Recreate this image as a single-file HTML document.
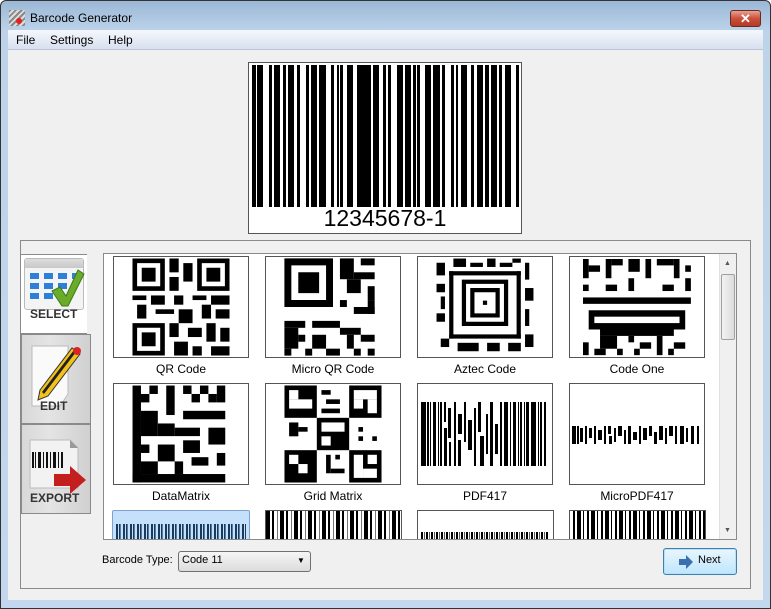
<!DOCTYPE html>
<html><head><meta charset="utf-8"><style>
*{margin:0;padding:0;box-sizing:border-box}
body{width:771px;height:609px;overflow:hidden;background:#fff;font-family:"Liberation Sans",sans-serif;position:relative}
.abs{position:absolute}
.tile{position:absolute;width:136px;height:102px;border:1px solid #555;background:#fff;overflow:hidden}
.lbl{position:absolute;width:136px;text-align:center;font-size:12px;color:#000}
</style></head><body>
<div class="abs" style="left:0;top:0;width:771px;height:609px;background:linear-gradient(#9bb8d6,#bcd3ea 30px,#c3d8ee);border:1px solid #333;border-radius:6px 6px 0 0"></div>
<div class="abs" style="left:9px;top:10px;width:16px;height:16px;background:repeating-linear-gradient(135deg,#888 0 2px,#ddd 2px 4px)"></div>
<div class="abs" style="left:16px;top:18px;width:6px;height:6px;background:#d22;border-radius:50%"></div>
<div class="abs" style="left:30px;top:11px;font-size:12px;color:#000">Barcode Generator</div>
<div class="abs" style="left:730px;top:10px;width:31px;height:17px;background:linear-gradient(#e8a093,#c9503c 50%,#b63a26);border:1px solid #6b2a20;border-radius:3px;color:#fff;font-size:13px;font-weight:bold;text-align:center;line-height:15px">✕</div>
<div class="abs" style="left:8px;top:30px;width:755px;height:570px;background:#f0f0f0"></div>
<div class="abs" style="left:8px;top:30px;width:755px;height:20px;background:linear-gradient(#f5f7fc,#d8e0ef);border-bottom:1px solid #b9c3d6"></div>
<div class="abs" style="left:16px;top:33px;font-size:12px">File</div>
<div class="abs" style="left:50px;top:33px;font-size:12px">Settings</div>
<div class="abs" style="left:108px;top:33px;font-size:12px">Help</div>
<div class="abs" style="left:248px;top:62px;width:274px;height:172px;background:#fff;border:1px solid #555"></div>
<svg class="abs" style="left:0;top:0" width="771" height="240"><g fill="#000">
<rect x="252" y="65" width="4" height="142"/><rect x="257" y="65" width="6" height="142"/><rect x="269" y="65" width="3" height="142"/><rect x="274" y="65" width="6" height="142"/><rect x="283" y="65" width="3" height="142"/><rect x="288" y="65" width="6" height="142"/><rect x="297" y="65" width="3" height="142"/><rect x="306" y="65" width="3" height="142"/><rect x="311" y="65" width="6" height="142"/><rect x="319" y="65" width="7" height="142"/><rect x="331" y="65" width="3" height="142"/><rect x="337" y="65" width="2" height="142"/><rect x="340" y="65" width="3" height="142"/><rect x="347" y="65" width="6" height="142"/><rect x="357" y="65" width="14" height="142"/><rect x="373" y="65" width="6" height="142"/><rect x="383" y="65" width="3" height="142"/><rect x="388" y="65" width="3" height="142"/><rect x="397" y="65" width="6" height="142"/><rect x="405" y="65" width="6" height="142"/><rect x="413" y="65" width="3" height="142"/><rect x="417" y="65" width="3" height="142"/><rect x="425" y="65" width="6" height="142"/><rect x="433" y="65" width="7" height="142"/><rect x="442" y="65" width="3" height="142"/><rect x="451" y="65" width="3" height="142"/><rect x="456" y="65" width="2" height="142"/><rect x="461" y="65" width="6" height="142"/><rect x="471" y="65" width="3" height="142"/><rect x="477" y="65" width="6" height="142"/><rect x="485" y="65" width="4" height="142"/><rect x="491" y="65" width="6" height="142"/><rect x="499" y="65" width="3" height="142"/><rect x="505" y="65" width="6" height="142"/><rect x="516" y="65" width="3" height="142"/>
</g><text x="385" y="226" font-family="Liberation Sans" font-size="23" text-anchor="middle">12345678-1</text></svg>
<div class="abs" style="left:20px;top:240px;width:731px;height:349px;background:#fff;border:1px solid #8a8a8a"></div>
<div class="abs" style="left:87px;top:241px;width:663px;height:347px;background:#f0f0f0"></div>
<div class="abs" style="left:21px;top:241px;width:66px;height:347px;background:#f0f0f0"></div>
<div class="abs" style="left:20px;top:254px;width:67px;height:80px;background:#fff;border:1px solid #8a8a8a;border-right:none"></div>
<div class="abs" style="left:24px;top:258px;width:60px;height:52px;background:#f4f4f4;border:1px solid #bbb;border-radius:3px"></div>
<div class="abs" style="left:25px;top:259px;width:58px;height:9px;background:linear-gradient(#ddd,#c8c8c8)"></div>
<svg class="abs" style="left:24px;top:258px" width="62" height="55"><g fill="#2d7fd8"><rect x="6" y="15" width="9" height="6"/><rect x="20" y="15" width="9" height="6"/><rect x="34" y="15" width="9" height="6"/><rect x="48" y="15" width="8" height="6"/><rect x="6" y="25" width="9" height="6"/><rect x="20" y="25" width="9" height="6"/><rect x="34" y="25" width="9" height="6"/><rect x="6" y="35" width="9" height="6"/><rect x="20" y="35" width="9" height="6"/></g><path d="M28 33 L36 29 L42 38 L54 12 L60 16 L44 48 L38 48 Z" fill="#6aab2a" stroke="#3d7a15"/></svg>
<div class="abs" style="left:30px;top:307px;font-size:12px;font-weight:bold;color:#333">SELECT</div>
<div class="abs" style="left:21px;top:334px;width:70px;height:90px;background:linear-gradient(90deg,#d8d8d8,#e4e4e4 40%,#d0d0d0);border:1px solid #8a8a8a"></div>
<svg class="abs" style="left:28px;top:344px" width="60" height="70"><path d="M4 2 H40 V50 L32 62 H4 Z" fill="#fafafa" stroke="#bbb"/><path d="M12 46 L44 4 L52 10 L20 52 L10 56 Z" fill="#f2c21b" stroke="#333"/><path d="M14 48 L46 6 L48 8 L16 50Z" fill="#222"/><circle cx="49" cy="7" r="4" fill="#d22"/></svg>
<div class="abs" style="left:40px;top:399px;font-size:12px;font-weight:bold;color:#333">EDIT</div>
<div class="abs" style="left:21px;top:424px;width:70px;height:90px;background:linear-gradient(90deg,#d8d8d8,#e4e4e4 40%,#d0d0d0);border:1px solid #8a8a8a"></div>
<svg class="abs" style="left:28px;top:438px" width="60" height="60"><path d="M2 2 H42 L50 10 V50 H2 Z" fill="#f2f2f2" stroke="#bbb"/><path d="M42 2 V10 H50Z" fill="#999"/><g fill="#111"><rect x="4" y="14" width="2" height="16"/><rect x="7" y="14" width="1" height="16"/><rect x="10" y="14" width="3" height="16"/><rect x="15" y="14" width="1" height="16"/><rect x="18" y="14" width="2" height="16"/><rect x="22" y="14" width="1" height="16"/><rect x="25" y="14" width="3" height="16"/><rect x="30" y="14" width="1" height="16"/><rect x="33" y="14" width="2" height="16"/></g><path d="M26 36 H42 V28 L58 42 L42 56 V48 H26Z" fill="#c41e1e"/></svg>
<div class="abs" style="left:30px;top:491px;font-size:12px;font-weight:bold;color:#333">EXPORT</div>
<div class="abs" style="left:103px;top:253px;width:634px;height:287px;background:#fff;border:1px solid #8a8a8a;overflow:hidden">
<div class="abs" style="left:615px;top:0;width:18px;height:286px;background:#f0f0f0;border-left:1px solid #e0e0e0"></div>
<div class="abs" style="left:617px;top:20px;width:14px;height:66px;background:linear-gradient(90deg,#f2f2f2,#dcdcdc);border:1px solid #a0a0a0;border-radius:2px"></div>
<div class="abs" style="left:620px;top:6px;font-size:7px;color:#555">▲</div>
<div class="abs" style="left:620px;top:273px;font-size:7px;color:#555">▼</div>
</div>
<div class="tile" style="left:113px;top:256px"><svg width="134" height="100" viewBox="-4 -0.3 29 21.6"><g fill="#000"><path d="M0 0h7v7h-7zM1 1v5h5v-5zM2 2h3v3h-3z" fill-rule="evenodd"/><path d="M14 0h7v7h-7zM15 1v5h5v-5zM16 2h3v3h-3z" fill-rule="evenodd"/><path d="M0 14h7v7h-7zM1 15v5h5v-5zM2 16h3v3h-3z" fill-rule="evenodd"/><rect x="8" y="0" width="2" height="3"/><rect x="11" y="1" width="2" height="4"/><rect x="8" y="4" width="2" height="3"/><rect x="0" y="8" width="3" height="1"/><rect x="4" y="8" width="3" height="2"/><rect x="9" y="8" width="2" height="2"/><rect x="13" y="8" width="3" height="1"/><rect x="17" y="8" width="4" height="2"/><rect x="1" y="10" width="2" height="3"/><rect x="5" y="11" width="4" height="1"/><rect x="10" y="11" width="3" height="3"/><rect x="15" y="10" width="2" height="3"/><rect x="18" y="11" width="3" height="2"/><rect x="8" y="14" width="2" height="3"/><rect x="12" y="15" width="3" height="2"/><rect x="16" y="14" width="2" height="4"/><rect x="19" y="15" width="2" height="3"/><rect x="9" y="18" width="3" height="3"/><rect x="13" y="19" width="2" height="2"/><rect x="17" y="19" width="4" height="2"/></g></svg></div>
<div class="tile" style="left:265px;top:256px"><svg width="134" height="100" viewBox="-2.65 -0.2 19.3 14.4"><g fill="#000"><path d="M0 0h7v7h-7zM1 1v5h5v-5zM2 2h3v3h-3z" fill-rule="evenodd"/><rect x="8" y="0" width="2" height="3"/><rect x="11" y="0" width="2" height="1"/><rect x="10" y="2" width="3" height="1"/><rect x="9" y="3" width="2" height="2"/><rect x="12" y="4" width="1" height="2"/><rect x="8" y="6" width="1" height="1"/><rect x="10" y="7" width="3" height="1"/><rect x="12" y="6" width="1" height="2"/><rect x="0" y="9" width="3" height="1"/><rect x="4" y="9" width="4" height="1"/><rect x="0" y="10" width="2" height="3"/><rect x="2" y="11" width="1" height="1"/><rect x="4" y="11" width="2" height="2"/><rect x="8" y="10" width="3" height="1"/><rect x="9" y="11" width="1" height="2"/><rect x="11" y="11" width="2" height="1"/><rect x="3" y="13" width="1" height="1"/><rect x="6" y="13" width="2" height="1"/><rect x="10" y="13" width="1" height="1"/><rect x="12" y="13" width="1" height="1"/><rect x="0" y="13" width="1" height="1"/></g></svg></div>
<div class="tile" style="left:417px;top:256px"><svg width="134" height="100" viewBox="-4.4 -0.35 31.8 23.7"><g fill="#000"><path d="M6 5h11v11h-11zM7 6v9h9v-9zM8 7h7v7h-7zM9 8v5h5v-5zM11 10h1v1h-1z" fill-rule="evenodd"/><rect x="3" y="3" width="17" height="1"/><rect x="3" y="3" width="1" height="16"/><rect x="3" y="18" width="17" height="1"/><rect x="19" y="3" width="1" height="16"/><rect x="4" y="0" width="3" height="2"/><rect x="8" y="1" width="3" height="1"/><rect x="12" y="0" width="2" height="2"/><rect x="15" y="1" width="3" height="1"/><rect x="18" y="0" width="2" height="1"/><rect x="0" y="1" width="2" height="3"/><rect x="21" y="1" width="1" height="4"/><rect x="0" y="6" width="2" height="2"/><rect x="1" y="9" width="1" height="3"/><rect x="0" y="13" width="2" height="2"/><rect x="21" y="7" width="2" height="3"/><rect x="21" y="12" width="1" height="4"/><rect x="1" y="19" width="2" height="2"/><rect x="5" y="20" width="5" height="2"/><rect x="12" y="20" width="3" height="2"/><rect x="17" y="20" width="3" height="2"/><rect x="21" y="18" width="2" height="3"/></g></svg></div>
<div class="tile" style="left:569px;top:256px"><svg width="134" height="100" viewBox="-2.29 -0.31 23.6 15.6" preserveAspectRatio="none"><g fill="#000"><rect x="0" y="0" width="1" height="3"/><rect x="1" y="1" width="2" height="1"/><rect x="4" y="0" width="1" height="3"/><rect x="5" y="0" width="2" height="1"/><rect x="8" y="0" width="2" height="2"/><rect x="11" y="0" width="1" height="3"/><rect x="13" y="0" width="3" height="1"/><rect x="16" y="0" width="1" height="3"/><rect x="18" y="1" width="1" height="1"/><rect x="0" y="4" width="1" height="1"/><rect x="4" y="4" width="2" height="1"/><rect x="8" y="3" width="1" height="2"/><rect x="14" y="4" width="2" height="1"/><rect x="18" y="3" width="1" height="2"/><rect x="0" y="6" width="19" height="1"/><rect x="1" y="8" width="17" height="3"/><rect x="2" y="9" width="15" height="1" fill="#fff"/><rect x="3" y="11" width="13" height="1"/><rect x="0" y="13" width="1" height="2"/><rect x="3" y="12" width="3" height="2"/><rect x="8" y="12" width="1" height="1"/><rect x="10" y="13" width="2" height="1"/><rect x="13" y="12" width="1" height="3"/><rect x="16" y="13" width="2" height="1"/><rect x="2" y="14" width="2" height="1"/><rect x="6" y="14" width="1" height="1"/><rect x="9" y="14" width="1" height="1"/><rect x="15" y="14" width="1" height="1"/></g></svg></div>
<div class="lbl" style="left:113px;top:362px">QR Code</div>
<div class="lbl" style="left:265px;top:362px">Micro QR Code</div>
<div class="lbl" style="left:417px;top:362px">Aztec Code</div>
<div class="lbl" style="left:569px;top:362px">Code One</div>
<div class="tile" style="left:113px;top:383px"><svg width="134" height="100" viewBox="-4.4 -0.35 31.8 23.7"><g fill="#000"><rect x="0" y="0" width="2" height="23"/><rect x="0" y="21" width="22" height="2"/><rect x="2" y="2" width="2" height="2"/><rect x="4" y="0" width="2" height="2"/><rect x="8" y="0" width="2" height="7"/><rect x="12" y="0" width="2" height="2"/><rect x="14" y="2" width="2" height="2"/><rect x="16" y="0" width="2" height="2"/><rect x="18" y="2" width="2" height="2"/><rect x="20" y="0" width="2" height="4"/><rect x="2" y="6" width="4" height="6"/><rect x="6" y="9" width="4" height="3"/><rect x="12" y="6" width="10" height="2"/><rect x="10" y="10" width="6" height="2"/><rect x="18" y="10" width="4" height="4"/><rect x="2" y="14" width="2" height="2"/><rect x="6" y="14" width="4" height="4"/><rect x="12" y="13" width="4" height="3"/><rect x="2" y="18" width="4" height="3"/><rect x="10" y="18" width="2" height="3"/><rect x="14" y="17" width="4" height="2"/><rect x="20" y="16" width="2" height="3"/></g></svg></div>
<div class="tile" style="left:265px;top:383px"><svg width="134" height="100" viewBox="-4 -0.3 29 21.6"><g fill="#000"><rect x="0" y="0" width="7" height="7"/><rect x="14" y="0" width="7" height="7"/><rect x="7" y="7" width="7" height="7"/><rect x="0" y="14" width="7" height="7"/><rect x="14" y="14" width="7" height="7"/><rect x="8" y="1" width="2" height="1"/><rect x="9" y="3" width="3" height="1"/><rect x="8" y="5" width="4" height="1"/><rect x="1" y="8" width="2" height="3"/><rect x="3" y="9" width="2" height="1"/><rect x="16" y="9" width="1" height="1"/><rect x="16" y="11" width="1" height="1"/><rect x="19" y="11" width="1" height="1"/><rect x="9" y="15" width="1" height="4"/><rect x="10" y="18" width="3" height="1"/><rect x="11" y="15" width="1" height="1"/></g><g fill="#fff"><rect x="1" y="1" width="2" height="2"/><rect x="1" y="3" width="5" height="2"/><rect x="15" y="1" width="5" height="2"/><rect x="15" y="3" width="2" height="2"/><rect x="18" y="3" width="2" height="3"/><rect x="8" y="8" width="5" height="2"/><rect x="8" y="11" width="2" height="2"/><rect x="1" y="15" width="2" height="2"/><rect x="3" y="17" width="2" height="2"/><rect x="15" y="15" width="2" height="5"/><rect x="17" y="18" width="3" height="2"/><rect x="18" y="15" width="2" height="2"/></g></svg></div>
<div class="tile" style="left:417px;top:383px"><svg width="134" height="100"><g fill="#000"><rect x="3" y="18" width="5" height="64"/><rect x="9" y="18" width="2" height="64"/><rect x="12" y="18" width="1" height="64"/><rect x="15" y="18" width="3" height="64"/><rect x="20" y="18" width="1" height="64"/><rect x="22" y="18" width="2" height="64"/><rect x="26" y="18" width="2" height="20"/><rect x="26" y="44" width="3" height="38"/><rect x="30" y="24" width="3" height="30"/><rect x="31" y="58" width="2" height="24"/><rect x="36" y="18" width="2" height="64"/><rect x="40" y="30" width="4" height="20"/><rect x="40" y="56" width="3" height="26"/><rect x="46" y="18" width="2" height="40"/><rect x="50" y="36" width="4" height="30"/><rect x="56" y="24" width="2" height="58"/><rect x="60" y="18" width="3" height="30"/><rect x="62" y="52" width="4" height="30"/><rect x="68" y="30" width="2" height="40"/><rect x="72" y="18" width="3" height="64"/><rect x="77" y="40" width="3" height="30"/><rect x="82" y="18" width="2" height="64"/><rect x="86" y="18" width="4" height="64"/><rect x="92" y="18" width="1" height="64"/><rect x="95" y="18" width="3" height="64"/><rect x="100" y="18" width="1" height="64"/><rect x="102" y="18" width="2" height="64"/><rect x="106" y="18" width="1" height="64"/><rect x="108" y="18" width="3" height="64"/><rect x="113" y="18" width="5" height="64"/><rect x="120" y="18" width="1" height="64"/><rect x="122" y="18" width="2" height="64"/><rect x="126" y="18" width="2" height="64"/></g></svg></div>
<div class="tile" style="left:569px;top:383px"><svg width="134" height="100"><g fill="#000"><rect x="2" y="42" width="4" height="18"/><rect x="7" y="42" width="2" height="18"/><rect x="10" y="44" width="3" height="14"/><rect x="15" y="42" width="2" height="18"/><rect x="19" y="44" width="3" height="10"/><rect x="24" y="42" width="2" height="18"/><rect x="28" y="46" width="4" height="10"/><rect x="34" y="42" width="2" height="18"/><rect x="38" y="42" width="3" height="8"/><rect x="39" y="52" width="3" height="8"/><rect x="44" y="44" width="2" height="14"/><rect x="48" y="42" width="4" height="10"/><rect x="54" y="46" width="2" height="14"/><rect x="58" y="42" width="3" height="18"/><rect x="63" y="48" width="4" height="8"/><rect x="69" y="42" width="2" height="18"/><rect x="73" y="44" width="4" height="12"/><rect x="79" y="42" width="3" height="10"/><rect x="84" y="48" width="3" height="12"/><rect x="89" y="42" width="4" height="14"/><rect x="95" y="44" width="2" height="16"/><rect x="99" y="42" width="4" height="10"/><rect x="105" y="42" width="2" height="18"/><rect x="110" y="42" width="4" height="18"/><rect x="116" y="44" width="2" height="14"/><rect x="121" y="42" width="3" height="18"/><rect x="127" y="42" width="2" height="18"/></g></svg></div>
<div class="lbl" style="left:113px;top:489px">DataMatrix</div>
<div class="lbl" style="left:265px;top:489px">Grid Matrix</div>
<div class="lbl" style="left:417px;top:489px">PDF417</div>
<div class="lbl" style="left:569px;top:489px">MicroPDF417</div>
<div class="abs" style="left:104px;top:510px;width:614px;height:29px;overflow:hidden">
<div class="abs" style="left:8px;top:0;width:138px;height:40px;background:#c4e0fa;border:1px solid #7da2ce;border-radius:2px"></div>
<div class="abs" style="left:12px;top:14px;width:130px;height:20px;background:repeating-linear-gradient(90deg,#183a5c 0 2px,#c4e0fa 2px 3px,#183a5c 3px 4px,#5878a0 4px 5px,#c4e0fa 5px 7px)"></div>
<div class="tile" style="left:161px;top:0;width:137px;height:40px;background:repeating-linear-gradient(90deg,#000 0 4px,#fff 4px 6px,#000 6px 8px,#fff 8px 11px,#777 11px 12px,#fff 12px 14px)"></div>
<div class="tile" style="left:313px;top:0;width:137px;height:40px"><div class="abs" style="left:3px;top:21px;width:128px;height:8px;background:repeating-linear-gradient(90deg,#000 0 2px,#fff 2px 3px,#555 3px 4px,#fff 4px 5px)"></div></div>
<div class="tile" style="left:465px;top:0;width:137px;height:40px;background:repeating-linear-gradient(90deg,#fff 0 3px,#000 3px 5px,#fff 5px 7px,#000 7px 11px,#fff 11px 13px,#000 13px 14px)"></div>
</div>
<div class="abs" style="left:102px;top:554px;font-size:11px">Barcode Type:</div>
<div class="abs" style="left:178px;top:551px;width:133px;height:21px;background:linear-gradient(#f6f6f6,#dcdcdc);border:1px solid #707070;border-radius:3px"></div>
<div class="abs" style="left:182px;top:554px;font-size:11px">Code 11</div>
<div class="abs" style="left:297px;top:556px;font-size:8px">▼</div>
<div class="abs" style="left:663px;top:548px;width:74px;height:27px;background:linear-gradient(#eaf6fd,#bee6fd);border:1px solid #3c7fb1;border-radius:3px;box-shadow:inset 0 0 0 1px #b8e0f8"></div>
<svg class="abs" style="left:678px;top:554px" width="16" height="16"><path d="M1 5 H8 V1 L15 8 L8 15 V11 H1 Z" fill="#3a6fb0"/></svg>
<div class="abs" style="left:698px;top:554px;font-size:11px">Next</div>
</body></html>
